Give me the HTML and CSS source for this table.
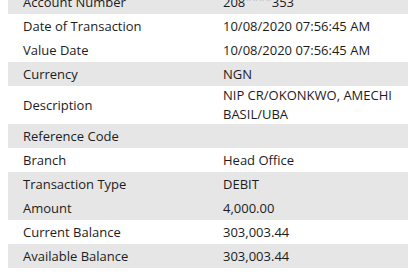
FILE: index.html
```html
<!DOCTYPE html>
<html>
<head>
<meta charset="utf-8">
<link rel="stylesheet" href="styles.css">
</head>
<body>
<div class="details">
  <div class="row shade"><div class="label">Account Number</div><div class="value">208<span class="mask">****</span>353</div></div>
  <div class="row"><div class="label">Date of Transaction</div><div class="value">10/08/2020 07:56:45 AM</div></div>
  <div class="row"><div class="label">Value Date</div><div class="value">10/08/2020 07:56:45 AM</div></div>
  <div class="row shade"><div class="label">Currency</div><div class="value">NGN</div></div>
  <div class="row"><div class="label">Description</div><div class="value">NIP CR/OKONKWO, AMECHI BASIL/UBA</div></div>
  <div class="row shade"><div class="label">Reference Code</div><div class="value"></div></div>
  <div class="row"><div class="label">Branch</div><div class="value">Head Office</div></div>
  <div class="row shade"><div class="label">Transaction Type</div><div class="value">DEBIT</div></div>
  <div class="row shade"><div class="label">Amount</div><div class="value">4,000.00</div></div>
  <div class="row"><div class="label">Current Balance</div><div class="value">303,003.44</div></div>
  <div class="row shade"><div class="label">Available Balance</div><div class="value">303,003.44</div></div>
</div>
</body>
</html>
```
FILE: styles.css
```css
html, body {
  margin: 0;
  padding: 0;
  background: #ffffff;
}
body {
  font-family: "Open Sans", "Noto Sans", sans-serif;
  font-size: 13px;
  color: #1c1c1c;
}
.details {
  margin: -10px 2px 0 8px;
  display: flex;
  flex-direction: column;
}
.row {
  display: grid;
  grid-template-columns: 200px 200px;
  min-height: 24px;
  align-items: center;
  line-height: 19px;
}
.row.shade {
  background: #e6e6e6;
}
.label {
  padding-left: 15px;
}
.value {
  padding: 0 15px;
}
.mask {
  color: #a8a8a8;
  font-size: 12px;
  vertical-align: 2px;
  line-height: 0;
}
```
